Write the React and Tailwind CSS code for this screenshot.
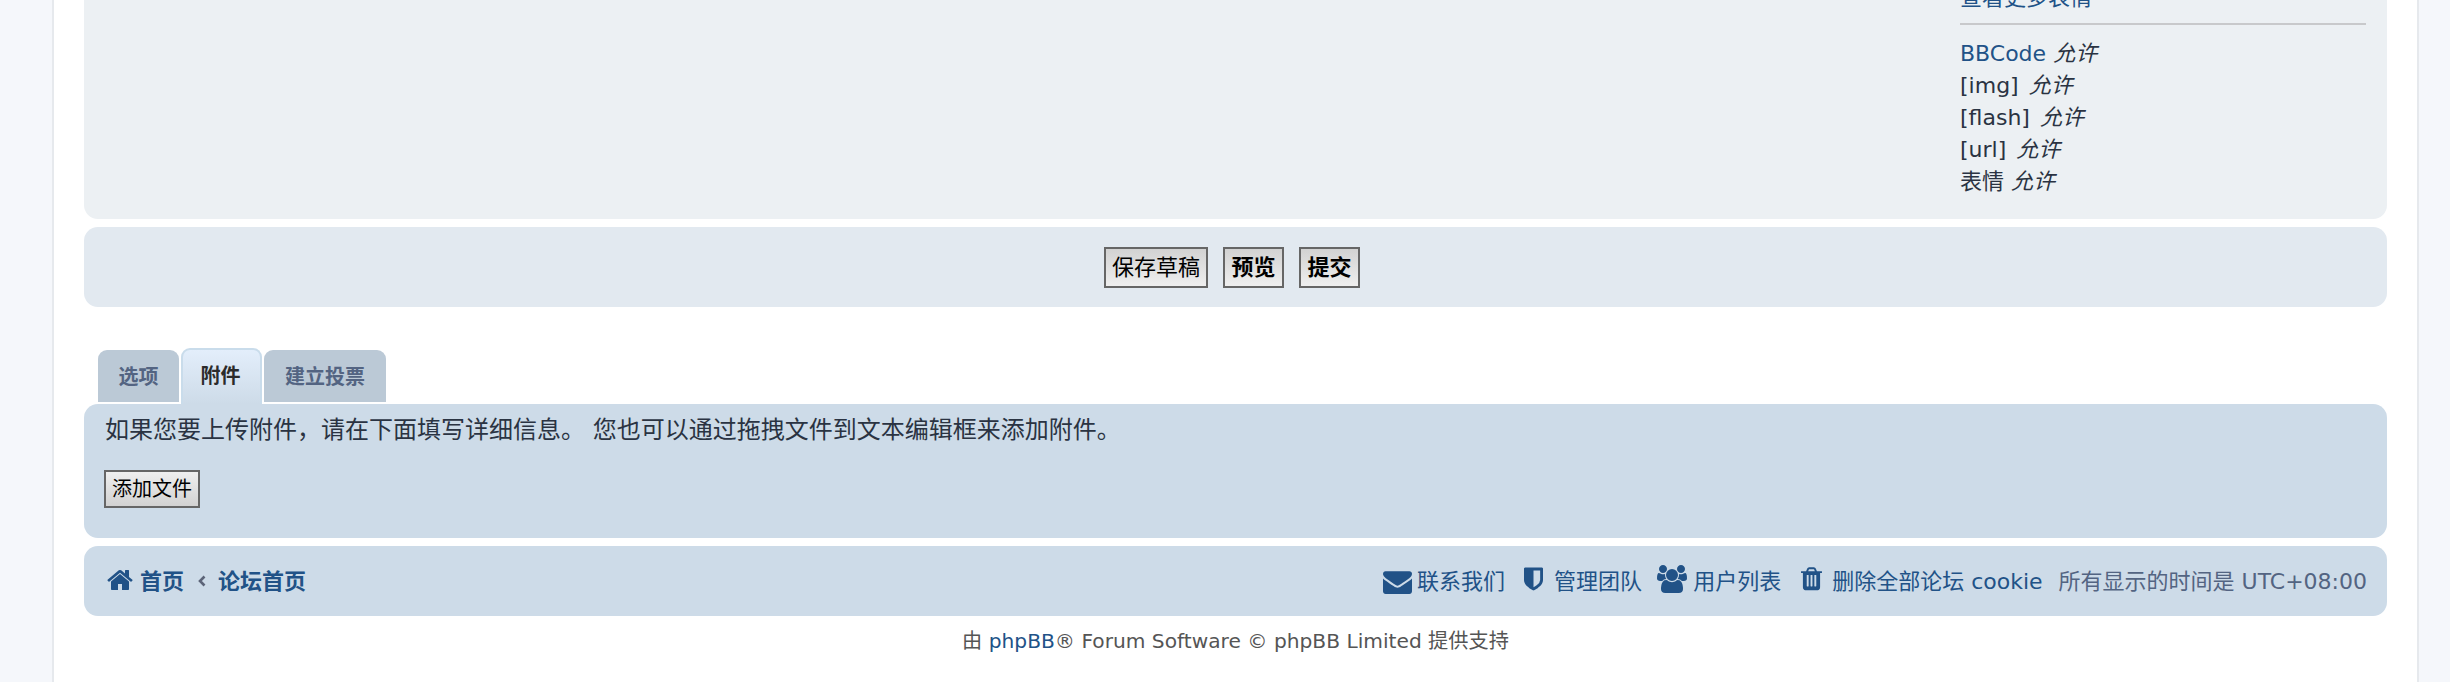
const SANS = "font-['DejaVu_Sans','Noto_Sans_CJK_SC',sans-serif]";

const Home = ({ className }) => (
  <svg viewBox="0 0 1664 1792" className={className} fill="currentColor"><path d="M1408 992v480q0 26-19 45t-45 19h-384v-384h-256v384h-384q-26 0-45-19t-19-45v-480q0-1 .5-3t.5-3l575-474 575 474q1 2 1 6zm223-69l-62 74q-8 9-21 11h-3q-13 0-21-7l-692-577-692 577q-12 8-24 7-13-2-21-11l-62-74q-8-10-7-23.5t11-21.5l719-599q32-26 76-26t76 26l244 204v-195q0-14 9-23t23-9h192q14 0 23 9t9 23v408l219 182q10 8 11 21.5t-7 23.5z" /></svg>
);
const Envelope = ({ className }) => (
  <svg viewBox="0 128 1792 1536" className={className} fill="currentColor"><path d="M1792 710v794q0 66-47 113t-113 47h-1472q-66 0-113-47t-47-113v-794q44 49 101 87 362 246 497 345 57 42 92.5 65.5t94.5 48 110 24.5h2q51 0 110-24.5t94.5-48 92.5-65.5q170-123 498-345 57-39 100-87zm0-294q0 79-49 151t-122 123q-376 261-468 325-10 7-42.5 30.5t-54 38-52 32.5-57.5 27-50 9h-2q-23 0-50-9t-57.5-27-52-32.5-54-38-42.5-30.5q-91-64-262-182.5t-205-142.5q-62-42-117-115.5t-55-136.5q0-78 41.5-130t118.5-52h1472q65 0 112.5 47t47.5 113z" /></svg>
);
const Shield = ({ className }) => (
  <svg viewBox="0 128 1280 1536" className={className} fill="currentColor"><path d="M1088 960v-640h-448v1137q119-63 213-137 235-184 235-360zm192-768v768q0 86-33.5 170.5t-83 150-118 127.5-126.5 103-121 77.5-89.5 49.5-42.5 20q-12 6-26 6t-26-6q-16-7-42.5-20t-89.5-49.5-121-77.5-126.5-103-118-127.5-83-150-33.5-170.5v-768q0-26 19-45t45-19h1152q26 0 45 19t19 45z" /></svg>
);
const Users = ({ className }) => (
  <svg viewBox="0 128 1920 1536" className={className} fill="currentColor"><path d="M593 896q-162 5-265 128h-134q-82 0-138-40.5t-56-118.5q0-353 124-353 6 0 43.5 21t97.5 42.5 119 21.5q67 0 133-23-5 37-5 66 0 139 81 256zm1071 637q0 120-73 189.5t-194 69.5h-874q-121 0-194-69.5t-73-189.5q0-53 3.5-103.5t14-109 26.5-108.5 43-97.5 62-81 85.5-53.5 111.5-20q10 0 43 21.5t73 48 107 48 135 21.5 135-21.5 107-48 73-48 43-21.5q61 0 111.5 20t85.5 53.5 62 81 43 97.5 26.5 108.5 14 109 3.5 103.5zm-1024-1277q0 106-75 181t-181 75-181-75-75-181 75-181 181-75 181 75 75 181zm704 384q0 159-112.5 271.5t-271.5 112.5-271.5-112.5-112.5-271.5 112.5-271.5 271.5-112.5 271.5 112.5 112.5 271.5zm576 225q0 78-56 118.5t-138 40.5h-134q-103-123-265-128 81-117 81-256 0-29-5-66 66 23 133 23 59 0 119-21.5t97.5-42.5 43.5-21q124 0 124 353zm-128-609q0 106-75 181t-181 75-181-75-75-181 75-181 181-75 181 75 75 181z" /></svg>
);
const Trash = ({ className }) => (
  <svg viewBox="0 128 1408 1536" className={className} fill="currentColor"><path d="M512 1328v-704q0-14-9-23t-23-9h-64q-14 0-23 9t-9 23v704q0 14 9 23t23 9h64q14 0 23-9t9-23zm256 0v-704q0-14-9-23t-23-9h-64q-14 0-23 9t-9 23v704q0 14 9 23t23 9h64q14 0 23-9t9-23zm256 0v-704q0-14-9-23t-23-9h-64q-14 0-23 9t-9 23v704q0 14 9 23t23 9h64q14 0 23-9t9-23zm-544-992h448l-48-117q-7-9-17-11h-317q-10 2-17 11zm928 32v64q0 14-9 23t-23 9h-96v948q0 83-47 143.5t-113 60.5h-832q-66 0-113-58.5t-47-141.5v-952h-96q-14 0-23-9t-9-23v-64q0-14 9-23t23-9h309l70-167q15-37 54-63t79-26h320q40 0 79 26t54 63l70 167h309q14 0 23 9t9 23z" /></svg>
);

const btn = "h-[41px] pt-[2px] border-2 border-[#666666] bg-gradient-to-b from-[#d2d2d2] to-[#efefef] text-black text-[22px] leading-none font-['Liberation_Sans','Noto_Sans_CJK_SC',sans-serif]";
const Item = ({ icon, children, className = "" }) => (
  <a className={"flex items-center text-[#215287] " + className}>{icon}{children}</a>
);

export default function App() {
  return (
    <div className={"h-[682px] overflow-hidden bg-[#f5f7fb] pl-[52px] pr-[31px] text-[#2a3342] " + SANS}>
      <div className="h-full border-x-2 border-[#e6e9ed] bg-white px-[30px]">
        <div className="h-[219px] rounded-b-[14px] bg-[#ecf0f3] flex justify-end overflow-hidden">
          <div className="w-[406px] mr-[21px] -mt-[18px] text-[22px] leading-[32px]">
            <a className="block text-[#215287] pb-[9px]">查看更多表情</a>
            <div className="h-[2px] bg-[#c8c9cb] mb-[13px]" />
            <div><a className="text-[#215287]">BBCode</a> <em>允许</em></div>
            <div>[img] <em className="ml-[3px]">允许</em></div>
            <div>[flash] <em className="ml-[3px]">允许</em></div>
            <div>[url] <em className="ml-[3px]">允许</em></div>
            <div>表情 <em>允许</em></div>
          </div>
        </div>

        <div className="mt-[8px] h-[80px] rounded-[14px] bg-[#e2e9f0] flex items-center justify-center gap-[15px] pr-[7px]">
          <button className={btn + " w-[104px]"}>保存草稿</button>
          <button className={btn + " w-[61px] font-bold"}>预览</button>
          <button className={btn + " w-[61px] font-bold"}>提交</button>
        </div>

        <div className="mt-[43px] h-[54px] pl-[14px] flex items-end gap-[2px] text-[20px] font-bold">
          <div className="w-[81px] h-[52px] mb-[2px] pt-[2px] rounded-t-[9px] bg-[#bbc9d6] text-[#536482] flex items-center justify-center">选项</div>
          <div className="w-[81px] h-[56px] pr-[2px] rounded-t-[9px] border-2 border-b-0 border-[#c9dceb] bg-gradient-to-b from-[#e3eefb] to-[#cddbe8] text-[#2b2b2b] flex items-start pt-[11px] justify-center">附件</div>
          <div className="w-[122px] h-[52px] mb-[2px] pt-[2px] rounded-t-[9px] bg-[#bbc9d6] text-[#536482] flex items-center justify-center">建立投票</div>
        </div>

        <div className="h-[134px] rounded-[14px] bg-[#cddbe8] pl-[21px] pr-[20px] pt-[8px] text-[24px] leading-[36px]">
          <p>如果您要上传附件，请在下面填写详细信息。 您也可以通过拖拽文件到文本编辑框来添加附件。</p>
          <button className="mt-[22px] -ml-[1px] block h-[38px] w-[96px] border-2 border-[#666666] bg-gradient-to-b from-[#efefef] to-[#d2d2d2] text-black text-[20px] leading-none font-['Liberation_Sans','Noto_Sans_CJK_SC',sans-serif]">添加文件</button>
        </div>

        <div className="mt-[8px] h-[70px] rounded-[14px] bg-[#cddbe8] flex items-center justify-between pl-[23px] pr-[20px] text-[22px]">
          <div className="flex items-center font-bold text-[#215287]">
            <Home className="w-[26px] h-[28px] mr-[7px] -mt-[3px]" />
            <a>首页</a>
            <svg viewBox="0 0 8 12" className="w-[8px] h-[12px] ml-[14px] mr-[12px] text-[#5c6478]" fill="none" stroke="currentColor" strokeWidth="2.6"><path d="M6.5 1.5 2 6l4.5 4.5" /></svg>
            <a>论坛首页</a>
          </div>
          <div className="flex items-center">
            <Item icon={<Envelope className="w-[29px] h-[25px] mr-[5px]" />} className="mr-[19px]">联系我们</Item>
            <Item icon={<Shield className="w-[19px] h-[24px] mr-[11px] -mt-[4px]" />} className="mr-[15px]">管理团队</Item>
            <Item icon={<Users className="w-[30px] h-[28px] mr-[6px] -mt-[4px]" />} className="mr-[20px]">用户列表</Item>
            <Item icon={<Trash className="w-[21px] h-[25px] mr-[10px] -mt-[3px]" />} className="mr-[16px]">删除全部论坛 cookie</Item>
            <span className="text-[#536482]">所有显示的时间是 UTC+08:00</span>
          </div>
        </div>

        <p className="mt-[12px] text-center text-[20.2px] leading-[26px] text-[#555555]">由 <a className="text-[#215287]">phpBB</a>® Forum Software © phpBB Limited 提供支持</p>
      </div>
    </div>
  );
}
